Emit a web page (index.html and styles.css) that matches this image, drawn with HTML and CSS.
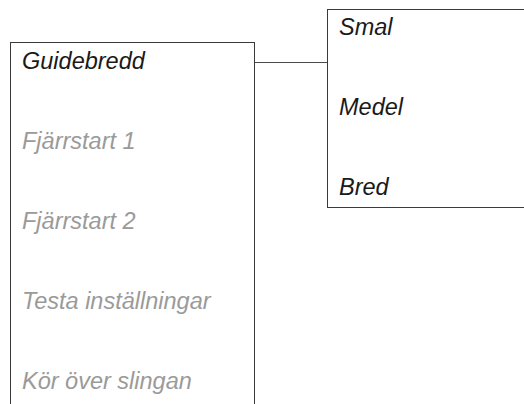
FILE: index.html
```html
<!DOCTYPE html>
<html lang="sv">
<head>
    <meta name="viewport" content="width=device-width, initial-scale=1.0">
    <title>Guidebredd</title>
    <link rel="stylesheet" href="styles.css">
</head>
<body>
    <div class="menu-tree">
        <ul class="menu main-menu">
            <li class="active">Guidebredd</li>
            <li class="disabled">Fjärrstart 1</li>
            <li class="disabled">Fjärrstart 2</li>
            <li class="disabled">Testa inställningar</li>
            <li class="disabled">Kör över slingan</li>
        </ul>
        <div class="connector"></div>
        <ul class="menu sub-menu">
            <li>Smal</li>
            <li>Medel</li>
            <li>Bred</li>
        </ul>
    </div>
</body>
</html>
```

FILE: styles.css
```css
body {
    margin: 0;
    background: #fff;
    font-family: "Liberation Sans", Arial, sans-serif;
    overflow: hidden;
}
.menu-tree {
    display: flex;
    align-items: flex-start;
    padding-left: 10px;
}
.menu {
    list-style: none;
    margin: 0;
    padding: 0;
    border: 1px solid #3a3a3a;
}
.menu li {
    height: 80px;
    padding: 6px 10px 0 11px;
    box-sizing: border-box;
    font-size: 23.5px;
    line-height: 24px;
    font-style: italic;
    color: #1a1a1a;
    white-space: nowrap;
}
.main-menu {
    width: 245px;
    box-sizing: border-box;
    margin-top: 42px;
    border-bottom: none;
}
.main-menu li.disabled {
    color: #9a9a9a;
}
.connector {
    width: 72px;
    height: 1px;
    margin-top: 62px;
    background: #4a4a4a;
}
.sub-menu {
    flex: 1;
    margin-top: 9px;
    margin-right: -2px;
    height: 199px;
    box-sizing: border-box;
}
.sub-menu li {
    padding-top: 5px;
}
```
